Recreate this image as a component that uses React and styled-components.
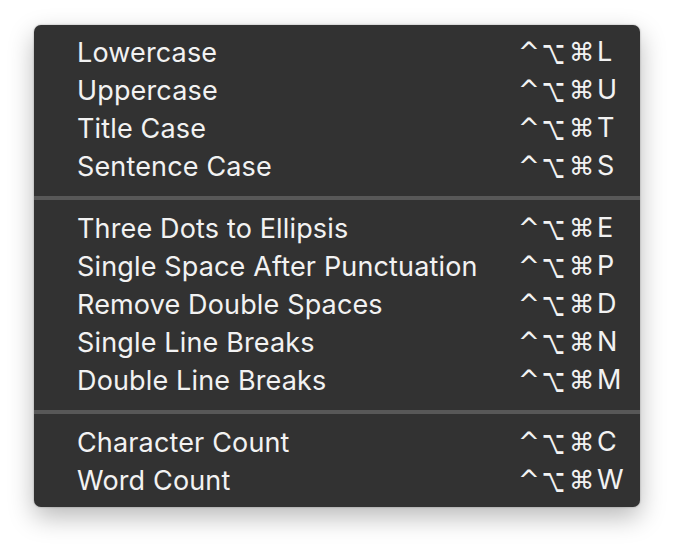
import React from 'react';
import styled, { createGlobalStyle } from 'styled-components';

const GlobalStyle = createGlobalStyle`
  html, body {
    margin: 0;
    padding: 0;
    background: #ffffff;
  }
  body {
    font-family: Inter, "Noto Sans", "Liberation Sans", sans-serif;
  }
`

const Page = styled.div`
  width: 674px;
  height: 550px;
  padding: 25px 0 0 34px;
  box-sizing: border-box;
`

const Menu = styled.div`
  width: 606px;
  height: 482px;
  box-sizing: border-box;
  padding: 8px 0;
  background: #323232;
  border-radius: 7px;
  box-shadow: 0 10px 26px rgba(0, 0, 0, 0.28), 0 0 2px rgba(0, 0, 0, 0.35);
  display: flex;
  flex-direction: column;
`

const Item = styled.div`
  display: grid;
  grid-template-columns: 1fr 122px;
  align-items: center;
  height: 38px;
  padding-left: 43px;
  color: #f2f2f2;
  font-size: 27px;
  letter-spacing: 0.15px;
`

const Label = styled.span`
  white-space: nowrap;
`

const Shortcut = styled.span`
  display: grid;
  grid-template-columns: 24px 27px 25px auto;
  align-items: center;
  white-space: nowrap;
  height: 38px;
`

const Glyph = styled.span`
  font-family: "DejaVu Sans", sans-serif;
  font-size: ${p => p.size}px;
  line-height: 38px;
  transform-origin: left center;
  transform: ${p => p.tf || 'none'};
`

const Key = styled.span`
  padding-left: 3px;
  font-size: 27px;
  line-height: 38px;
`

const Separator = styled.div`
  height: 24px;
  display: flex;
  align-items: center;

  &::after {
    content: '';
    display: block;
    width: 100%;
    height: 4px;
    margin-top: 2px;
    background: #585858;
  }
`

const sections = [
  [
    ['Lowercase', 'L'],
    ['Uppercase', 'U'],
    ['Title Case', 'T'],
    ['Sentence Case', 'S'],
  ],
  [
    ['Three Dots to Ellipsis', 'E'],
    ['Single Space After Punctuation', 'P'],
    ['Remove Double Spaces', 'D'],
    ['Single Line Breaks', 'N'],
    ['Double Line Breaks', 'M'],
  ],
  [
    ['Character Count', 'C'],
    ['Word Count', 'W'],
  ],
]

function MenuItem({ label, keyName }) {
  return (
    <Item>
      <Label>{label}</Label>
      <Shortcut>
        <Glyph size={26}>^</Glyph>
        <Glyph size={23} tf="scale(0.86, 1.45)">⌥</Glyph>
        <Glyph size={23} tf="scale(1.1)">⌘</Glyph>
        <Key>{keyName}</Key>
      </Shortcut>
    </Item>
  )
}

export default function App() {
  return (
    <>
      <GlobalStyle />
      <Page>
        <Menu>
          {sections.map((section, i) => (
            <React.Fragment key={i}>
              {i > 0 && <Separator />}
              {section.map(([label, k]) => (
                <MenuItem key={label} label={label} keyName={k} />
              ))}
            </React.Fragment>
          ))}
        </Menu>
      </Page>
    </>
  );
}
